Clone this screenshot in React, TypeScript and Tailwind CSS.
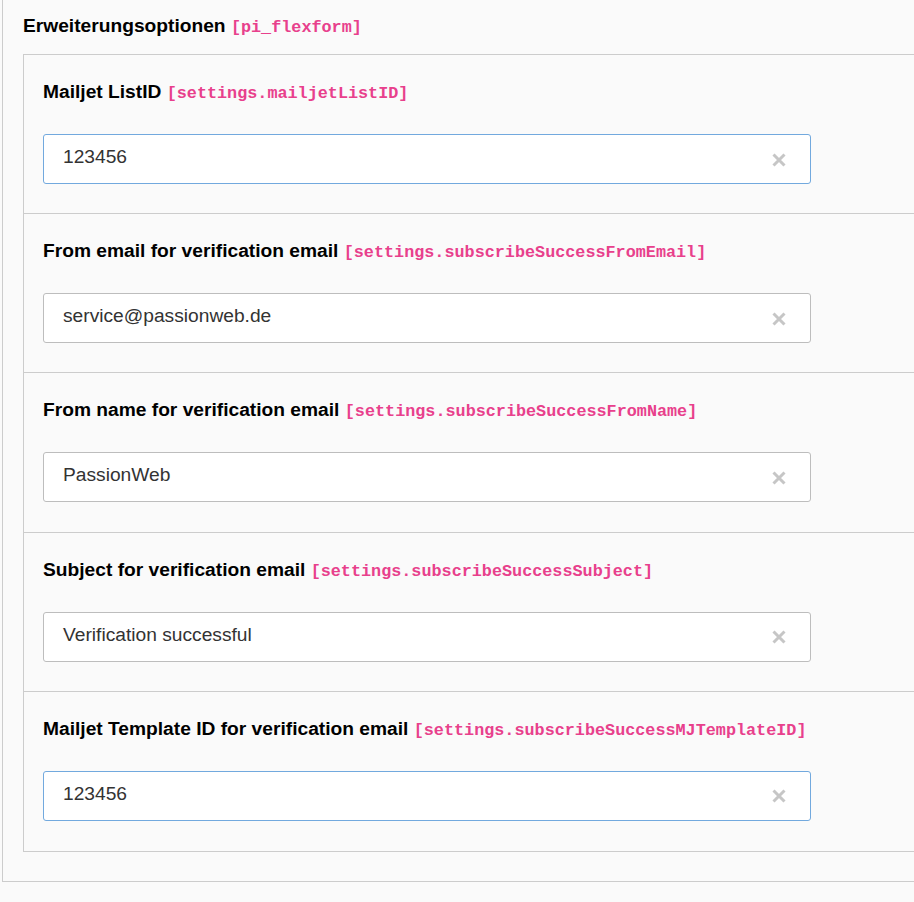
import React from "react";

type Field = { label: string; code: string; value: string; focused?: boolean };

const fields: Field[] = [
  { label: "Mailjet ListID", code: "[settings.mailjetListID]", value: "123456", focused: true },
  { label: "From email for verification email", code: "[settings.subscribeSuccessFromEmail]", value: "service@passionweb.de" },
  { label: "From name for verification email", code: "[settings.subscribeSuccessFromName]", value: "PassionWeb" },
  { label: "Subject for verification email", code: "[settings.subscribeSuccessSubject]", value: "Verification successful" },
  { label: "Mailjet Template ID for verification email", code: "[settings.subscribeSuccessMJTemplateID]", value: "123456", focused: true },
];

function ClearIcon() {
  return (
    <svg width="14" height="14" viewBox="0 0 14 14" className="shrink-0 block">
      <path d="M1.5 1.5 L12.5 12.5 M12.5 1.5 L1.5 12.5" stroke="#c6c6c6" strokeWidth="3" strokeLinecap="butt" />
    </svg>
  );
}

function Section({ f, last }: { f: Field; last: boolean }) {
  return (
    <div className={`pl-[19px] pt-[25px] ${last ? "pb-[30.2px]" : "pb-[29.2px] border-b border-[#cccccc]"}`}>
      <div className="h-[23px] text-[19.2px] leading-[23px] font-bold text-black whitespace-nowrap">
        {f.label}{" "}
        <span className="font-['Liberation_Mono',monospace] text-[16.8px] leading-[23px] text-[#e8408c]">{f.code}</span>
      </div>
      <div
        className={`mt-[31px] w-[768px] h-[50px] bg-white rounded-[3px] border flex items-start justify-between pl-[19px] pr-[24px] ${
          f.focused ? "border-[#72a9de]" : "border-[#bdbdbd]"
        }`}
      >
        <span className="pt-[10px] text-[19.2px] leading-[23px] text-[#333333]">{f.value}</span>
        <span className="self-center pt-[1px]"><ClearIcon /></span>
      </div>
    </div>
  );
}

export default function App() {
  return (
    <div className="w-[914px] h-[902px] overflow-hidden bg-[#fafafa] font-['Liberation_Sans',Arial,sans-serif]">
      <div className="ml-[2px] w-[940px] border-l border-b border-[#cccccc] pl-[20px]">
        <div className="h-[54px] pt-[14px] text-[19.2px] leading-[23px] font-bold text-black whitespace-nowrap">
          Erweiterungsoptionen{" "}
          <span className="font-['Liberation_Mono',monospace] text-[16.8px] leading-[23px] text-[#e8408c]">[pi_flexform]</span>
        </div>
        <div className="w-[920px] border-t border-l border-b border-[#cccccc] mb-[29px]">
          {fields.map((f, i) => (
            <Section key={i} f={f} last={i === fields.length - 1} />
          ))}
        </div>
      </div>
    </div>
  );
}
